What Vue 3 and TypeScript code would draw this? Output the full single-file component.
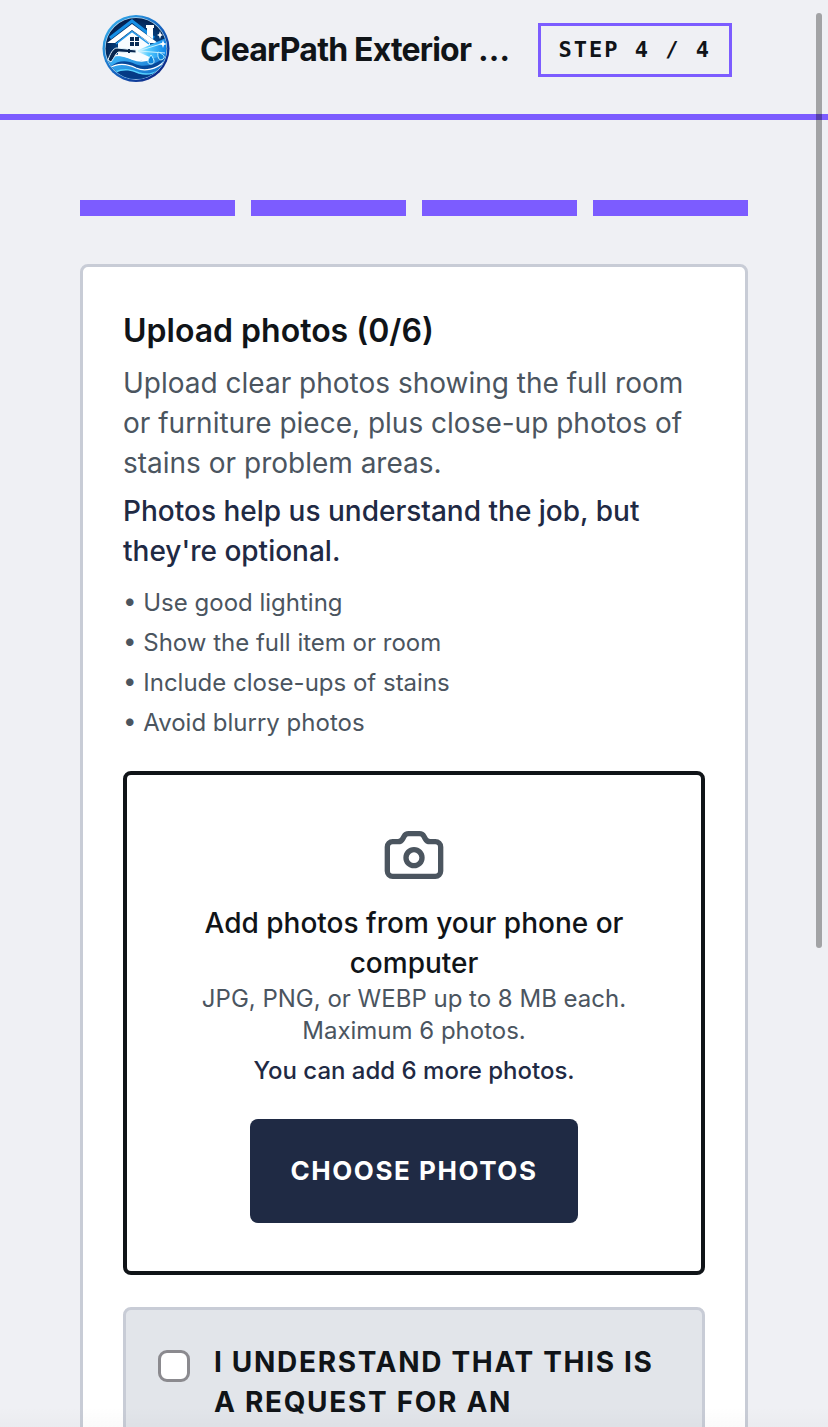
<script setup lang="ts">
import { ref } from 'vue'

const totalSteps = 4
const currentStep = ref(4)
const maxPhotos = 6
const photos = ref<File[]>([])
const agreed = ref(false)
const picker = ref<HTMLInputElement | null>(null)

const tips: string[] = [
  'Use good lighting',
  'Show the full item or room',
  'Include close-ups of stains',
  'Avoid blurry photos',
]

function addPhotos(event: Event): void {
  const files = Array.from((event.target as HTMLInputElement).files ?? [])
  photos.value = [...photos.value, ...files].slice(0, maxPhotos)
}
</script>

<template>
  <div class="page">
    <header class="header">
      <svg class="logo" viewBox="0 0 80 80" aria-hidden="true">
        <defs>
          <linearGradient id="rim" x1="0" y1="0" x2="1" y2="1">
            <stop offset="0" stop-color="#3dbdf5" />
            <stop offset="0.5" stop-color="#1668c4" />
            <stop offset="1" stop-color="#09106f" />
          </linearGradient>
          <radialGradient id="sky" cx="0.55" cy="0.6" r="0.6">
            <stop offset="0" stop-color="#0f7fd0" />
            <stop offset="0.5" stop-color="#064a8e" />
            <stop offset="1" stop-color="#031f4d" />
          </radialGradient>
          <linearGradient id="jet" x1="0" y1="0" x2="1" y2="0">
            <stop offset="0" stop-color="#ffffff" />
            <stop offset="0.4" stop-color="#58cdff" />
            <stop offset="1" stop-color="#0b83e8" />
          </linearGradient>
          <linearGradient id="wave" x1="0" y1="0" x2="1" y2="1">
            <stop offset="0" stop-color="#45c2ff" />
            <stop offset="1" stop-color="#0458bd" />
          </linearGradient>
          <clipPath id="disc"><circle cx="40" cy="38.5" r="30.5" /></clipPath>
        </defs>
        <circle cx="40" cy="38.5" r="33.5" fill="url(#rim)" />
        <circle cx="40" cy="38.5" r="31.2" fill="#b9dcf2" />
        <circle cx="40" cy="38.5" r="30.5" fill="url(#sky)" />
        <g clip-path="url(#disc)">
          <path d="M14 28 36 11l22 17" fill="none" stroke="#168fe5" stroke-width="3" />
          <path d="M51 16h6v13l-6-4z" fill="#fff" />
          <path d="M50 15h8v3h-8z" fill="#fff" />
          <path d="M22 32 36 21l18 12v20H22z" fill="#f8fcff" />
          <path d="M11 33 36 14l26 19h-8L36 20 19 33z" fill="#fff" />
          <path d="m20 34 16-12.500L53 34" fill="none" stroke="#2196e8" stroke-width="1.500" />
          <path d="M34 27h9v9h-9z" fill="#0a2c55" />
          <path d="M38.500 27v9M34 31.500h9" stroke="#fff" stroke-width="1" />
          <path d="M40 41 70 28v20L58 49z" fill="url(#jet)" />
          <path d="m42 41 26-8M42 41l27 2" stroke="#c9f1ff" stroke-width="1" />
          <path d="M8 52c6-6 12-7 20-5 12 4 20 6 44-4v32H8z" fill="url(#wave)" />
          <path d="M14 57c8-7 17-7 25-3 9 4 20 1 30-7-5 11-17 15-27 12-10-4-18-6-28-2z" fill="#06489a" />
          <path d="M11 50c9-7 17-5 25-1 8 3 15 2 20-1" fill="none" stroke="#fff" stroke-width="1.500" />
          <path d="M13 58c10-6 19-4 27 0 9 4 20 1 28-6" fill="none" stroke="#fff" stroke-width="1.300" />
          <path d="M18 62c10-4 17-2 24 1 8 2 15 1 21-3-4 8-13 12-22 12-10 0-18-4-23-10z" fill="#053a86" />
          <path d="M19 62c10-4 17-2 24 1 7 2 14 1 20-3" fill="none" stroke="#56d2ff" stroke-width="1.500" />
          <path d="M12 50c2-6 5-12 9-12l19 2v3l-17-1c-3 0-4 5-8 10z" fill="#07264f" stroke="#e6f7ff" stroke-width="1" />
          <path d="M33 39v4" stroke="#07264f" stroke-width="2" />
          <path d="M55 45c-5 7-3 9 0 9 4 0 4-4 0-9zm7-3c-1 8 3 9 5 7 3-2 0-5-5-7z" fill="#0e86de" stroke="#c7f4ff" stroke-width="1" />
          <path d="m67 30 1 3 3 1-3 1-1 3-1-3-3-1 3-1zm-3-9 1 3 2 1-2 1-1 3-1-3-2-1 2-1z" fill="#fff" />
        </g>
      </svg>
      <span class="brand">ClearPath Exterior …</span>
      <span class="step">STEP {{ currentStep }} / {{ totalSteps }}</span>
    </header>

    <main class="content">
      <div class="progress" role="progressbar" aria-label="Progress" :aria-valuenow="currentStep" :aria-valuemax="totalSteps">
        <span v-for="n in totalSteps" :key="n" class="segment" :class="{ done: n <= currentStep }"></span>
      </div>

      <section class="card">
        <h1 class="title">Upload photos ({{ photos.length }}/{{ maxPhotos }})</h1>
        <p class="intro">Upload clear photos showing the full room or furniture piece, plus close-up photos of stains or problem areas.</p>
        <p class="intro note">Photos help us understand the job, but they're optional.</p>
        <ul class="tips">
          <li v-for="tip in tips" :key="tip">• {{ tip }}</li>
        </ul>

        <div class="dropzone">
          <svg class="camera" viewBox="0 0 24 24" aria-hidden="true">
            <path d="M13.997 4a2 2 0 0 1 1.760 1.050l.486.900A2 2 0 0 0 18.003 7H20a2 2 0 0 1 2 2v9a2 2 0 0 1-2 2H4a2 2 0 0 1-2-2V9a2 2 0 0 1 2-2h1.997a2 2 0 0 0 1.759-1.048l.489-.904A2 2 0 0 1 10.004 4z" />
            <circle cx="12" cy="13" r="3" />
          </svg>
          <p class="prompt">Add photos from your phone or computer</p>
          <p class="limits">JPG, PNG, or WEBP up to 8 MB each. Maximum {{ maxPhotos }} photos.</p>
          <p class="limits remaining">You can add {{ maxPhotos - photos.length }} more photos.</p>
          <input ref="picker" type="file" accept=".jpg,.jpeg,.png,.webp" multiple hidden aria-label="Photos" @change="addPhotos" />
          <button class="choose" type="button" @click="picker?.click()">CHOOSE PHOTOS</button>
        </div>

        <div class="agreement">
          <input id="agree" v-model="agreed" class="check" type="checkbox" />
          <label for="agree" class="terms">I UNDERSTAND THAT THIS IS A REQUEST FOR AN</label>
        </div>
      </section>
    </main>

    <div class="fade"></div>
    <div class="thumb"></div>
  </div>
</template>

<style>
body {
  margin: 0;
  background: #eff0f4;
}
</style>

<style scoped>
.page {
  position: relative;
  box-sizing: border-box;
  height: 100vh;
  overflow: hidden;
  background: #eff0f4;
  color: #101418;
  font-family: Inter, "Liberation Sans", sans-serif;
}

.header {
  display: flex;
  align-items: center;
  gap: 24px;
  padding: 10px 96px 24px;
  border-bottom: 6px solid #7c5cff;
}

.logo {
  flex: none;
  width: 80px;
  height: 80px;
}

.brand {
  flex: 1;
  min-width: 0;
  overflow: hidden;
  white-space: nowrap;
  text-overflow: ellipsis;
  font-size: 32px;
  line-height: 40px;
  font-weight: 700;
  letter-spacing: -0.025em;
}

.step {
  flex: none;
  padding: 8px 18px;
  border: 3px solid #7c5cff;
  font-family: "DejaVu Sans Mono", "Liberation Mono", monospace;
  font-size: 22px;
  line-height: 32px;
  font-weight: 700;
  letter-spacing: 2px;
  white-space: nowrap;
}

.content {
  padding: 80px;
}

.progress {
  display: flex;
  gap: 16px;
  margin-bottom: 48px;
}

.segment {
  flex: 1;
  height: 16px;
  background: #c8ccd6;
}

.segment.done {
  background: #7c5cff;
}

.card {
  padding: 40px;
  border: 3px solid #c8ccd6;
  border-radius: 8px;
  background: #fff;
}

.title,
.intro,
.prompt,
.limits {
  margin: 0;
}

.title {
  font-size: 32px;
  line-height: 48px;
  font-weight: 600;
}

.intro {
  margin-top: 8px;
  color: #4b555f;
  font-size: 28px;
  line-height: 40px;
}

.note {
  color: #1f2a44;
  font-weight: 500;
}

.tips {
  display: grid;
  gap: 8px;
  margin: 16px 0 32px;
  padding: 0;
  list-style: none;
  color: #4b555f;
  font-size: 24px;
  line-height: 32px;
}

.dropzone {
  display: flex;
  flex-direction: column;
  align-items: center;
  padding: 48px;
  border: 4px solid #101418;
  border-radius: 8px;
  text-align: center;
}

.camera {
  width: 64px;
  height: 64px;
  margin-bottom: 16px;
  fill: none;
  stroke: #4b555f;
  stroke-width: 2;
  stroke-linecap: round;
  stroke-linejoin: round;
}

.prompt {
  font-size: 28px;
  line-height: 40px;
  font-weight: 500;
}

.limits {
  color: #4b555f;
  font-size: 24px;
  line-height: 32px;
}

.remaining {
  margin-top: 8px;
  color: #1f2a44;
  font-weight: 500;
}

.choose {
  min-height: 104px;
  margin-top: 32px;
  padding: 0 40px;
  border: 0;
  border-radius: 8px;
  background: #1f2a44;
  color: #fff;
  font-family: inherit;
  font-size: 26px;
  line-height: 40px;
  font-weight: 700;
  letter-spacing: 0.06em;
}

.agreement {
  display: flex;
  align-items: flex-start;
  gap: 24px;
  margin-top: 32px;
  padding: 32px;
  border: 3px solid #c8ccd6;
  border-radius: 8px;
  background: #e2e5ea;
}

.check {
  flex: none;
  appearance: none;
  width: 32px;
  height: 32px;
  margin: 8px 0 0;
  border: 3px solid #8b8a8f;
  border-radius: 9px;
  background: #fff;
}

.check:checked {
  background: #7c5cff;
}

.terms {
  font-size: 28px;
  line-height: 40px;
  font-weight: 700;
  letter-spacing: 0.06em;
}

.fade {
  position: absolute;
  inset: auto 0 0;
  height: 20px;
  background: linear-gradient(to bottom, rgba(0, 0, 0, 0), rgba(0, 0, 0, 0.02));
  pointer-events: none;
}

.thumb {
  position: absolute;
  top: 13px;
  right: 6px;
  width: 6px;
  height: 65.500%;
  border-radius: 3px;
  background: rgba(0, 0, 0, 0.32);
}
</style>
